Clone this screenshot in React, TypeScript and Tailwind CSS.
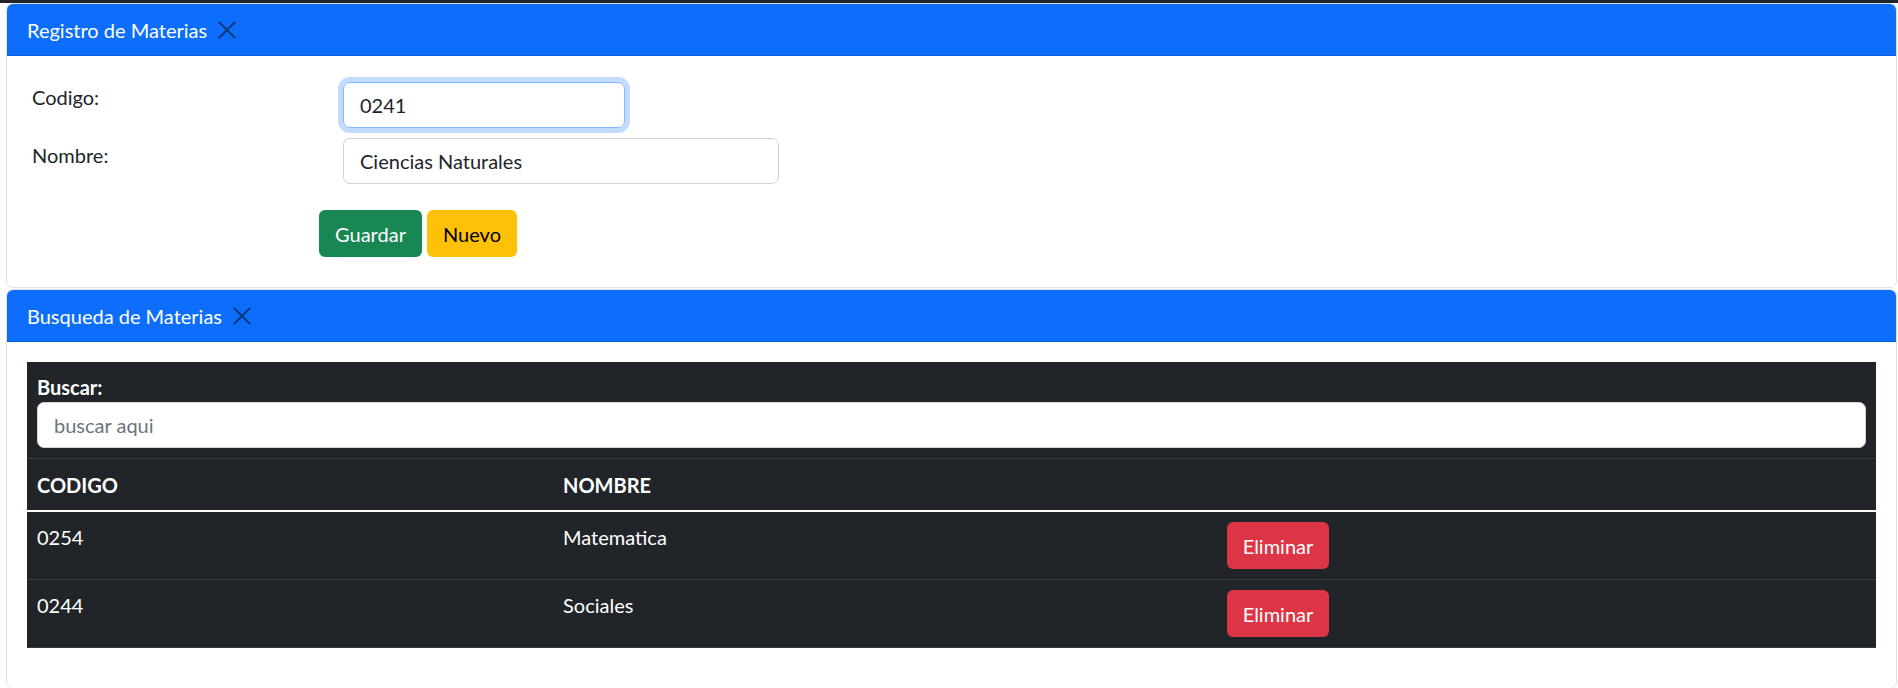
import React, { useState } from 'react';

const CloseX = () => (
  <svg width="20" height="20" viewBox="0 0 16 16" className="ml-[10px] text-[#0a3570]" fill="none">
    <path d="M1.5 1.5l13 13M14.5 1.5l-13 13" stroke="currentColor" strokeWidth="1.6" />
  </svg>
);

const CardHeader = ({ title }: { title: string }) => (
  <div className="flex items-center bg-[#0d6efd] text-white px-[20px] h-[52px] rounded-t-[6px] border-b border-[#0b5ed7]">
    <span>{title}</span>
    <CloseX />
  </div>
);

const materias = [
  { codigo: '0254', nombre: 'Matematica' },
  { codigo: '0244', nombre: 'Sociales' },
];

export default function App() {
  const [codigo, setCodigo] = useState('0241');
  const [nombre, setNombre] = useState('Ciencias Naturales');

  return (
    <div className="font-[Lato,'Noto_Sans',sans-serif] text-[20px] leading-[30px] text-[#212529] bg-white min-h-[688px]">
      <div className="h-[3px] bg-[#212529]" />

      {/* Registro */}
      <div className="ml-[6px] mr-[1px] border border-[#dee2e6] rounded-[7px] bg-white">
        <CardHeader title="Registro de Materias" />
        <div className="px-[20px] pt-[26px] pb-[30px]">
          <div className="flex items-start">
            <label className="w-[316px] pl-[5px]">Codigo:</label>
            <input
              value={codigo}
              onChange={(e) => setCodigo(e.target.value)}
              className="w-[282px] h-[46px] px-[16px] border border-[#86b7fe] rounded-[7px] outline-none shadow-[0_0_0_5px_rgba(13,110,253,0.25)]"
            />
          </div>
          <div className="flex items-start mt-[10px]">
            <label className="w-[316px] pl-[5px] pt-[2px]">Nombre:</label>
            <input
              value={nombre}
              onChange={(e) => setNombre(e.target.value)}
              className="w-[436px] h-[46px] px-[16px] border border-[#ced4da] rounded-[7px] outline-none"
            />
          </div>
          <div className="flex gap-[5px] mt-[26px] pl-[292px]">
            <button className="h-[47px] w-[103px] bg-[#198754] text-white rounded-[6px]">Guardar</button>
            <button className="h-[47px] w-[90px] bg-[#ffc107] text-black rounded-[6px]">Nuevo</button>
          </div>
        </div>
      </div>

      {/* Busqueda */}
      <div className="ml-[6px] mr-[1px] mt-[1px] border border-[#dee2e6] rounded-[7px] bg-white">
        <CardHeader title="Busqueda de Materias" />
        <div className="p-[20px]">
          <table className="w-full table-fixed border-collapse bg-[#212529] text-white mb-[20px]">
            <colgroup>
              <col className="w-[526px]" />
              <col className="w-[664px]" />
              <col />
            </colgroup>
            <thead>
              <tr className="border-b border-[#373b3e]">
                <td colSpan={3} className="px-[10px] pt-[10px] pb-[10px]">
                  <div className="font-bold">Buscar:</div>
                  <input
                    placeholder="buscar aqui"
                    className="w-full h-[46px] px-[16px] bg-white text-[#212529] placeholder:text-[#6c757d] border border-[#ced4da] rounded-[7px] outline-none"
                  />
                </td>
              </tr>
              <tr className="border-b-2 border-white">
                <th className="text-left font-bold px-[10px] pt-[11px] pb-[10px]">CODIGO</th>
                <th className="text-left font-bold px-[10px] pt-[11px] pb-[10px]">NOMBRE</th>
                <th className="px-[10px] pt-[11px] pb-[10px]" />
              </tr>
            </thead>
            <tbody>
              {materias.map((m) => (
                <tr key={m.codigo} className="border-b border-[#373b3e]">
                  <td className="align-top px-[10px] py-[10px]">{m.codigo}</td>
                  <td className="align-top px-[10px] py-[10px]">{m.nombre}</td>
                  <td className="align-top px-[10px] py-[10px]">
                    <button className="h-[47px] w-[102px] bg-[#dc3545] text-white rounded-[6px]">Eliminar</button>
                  </td>
                </tr>
              ))}
            </tbody>
          </table>
        </div>
      </div>
    </div>
  );
}
